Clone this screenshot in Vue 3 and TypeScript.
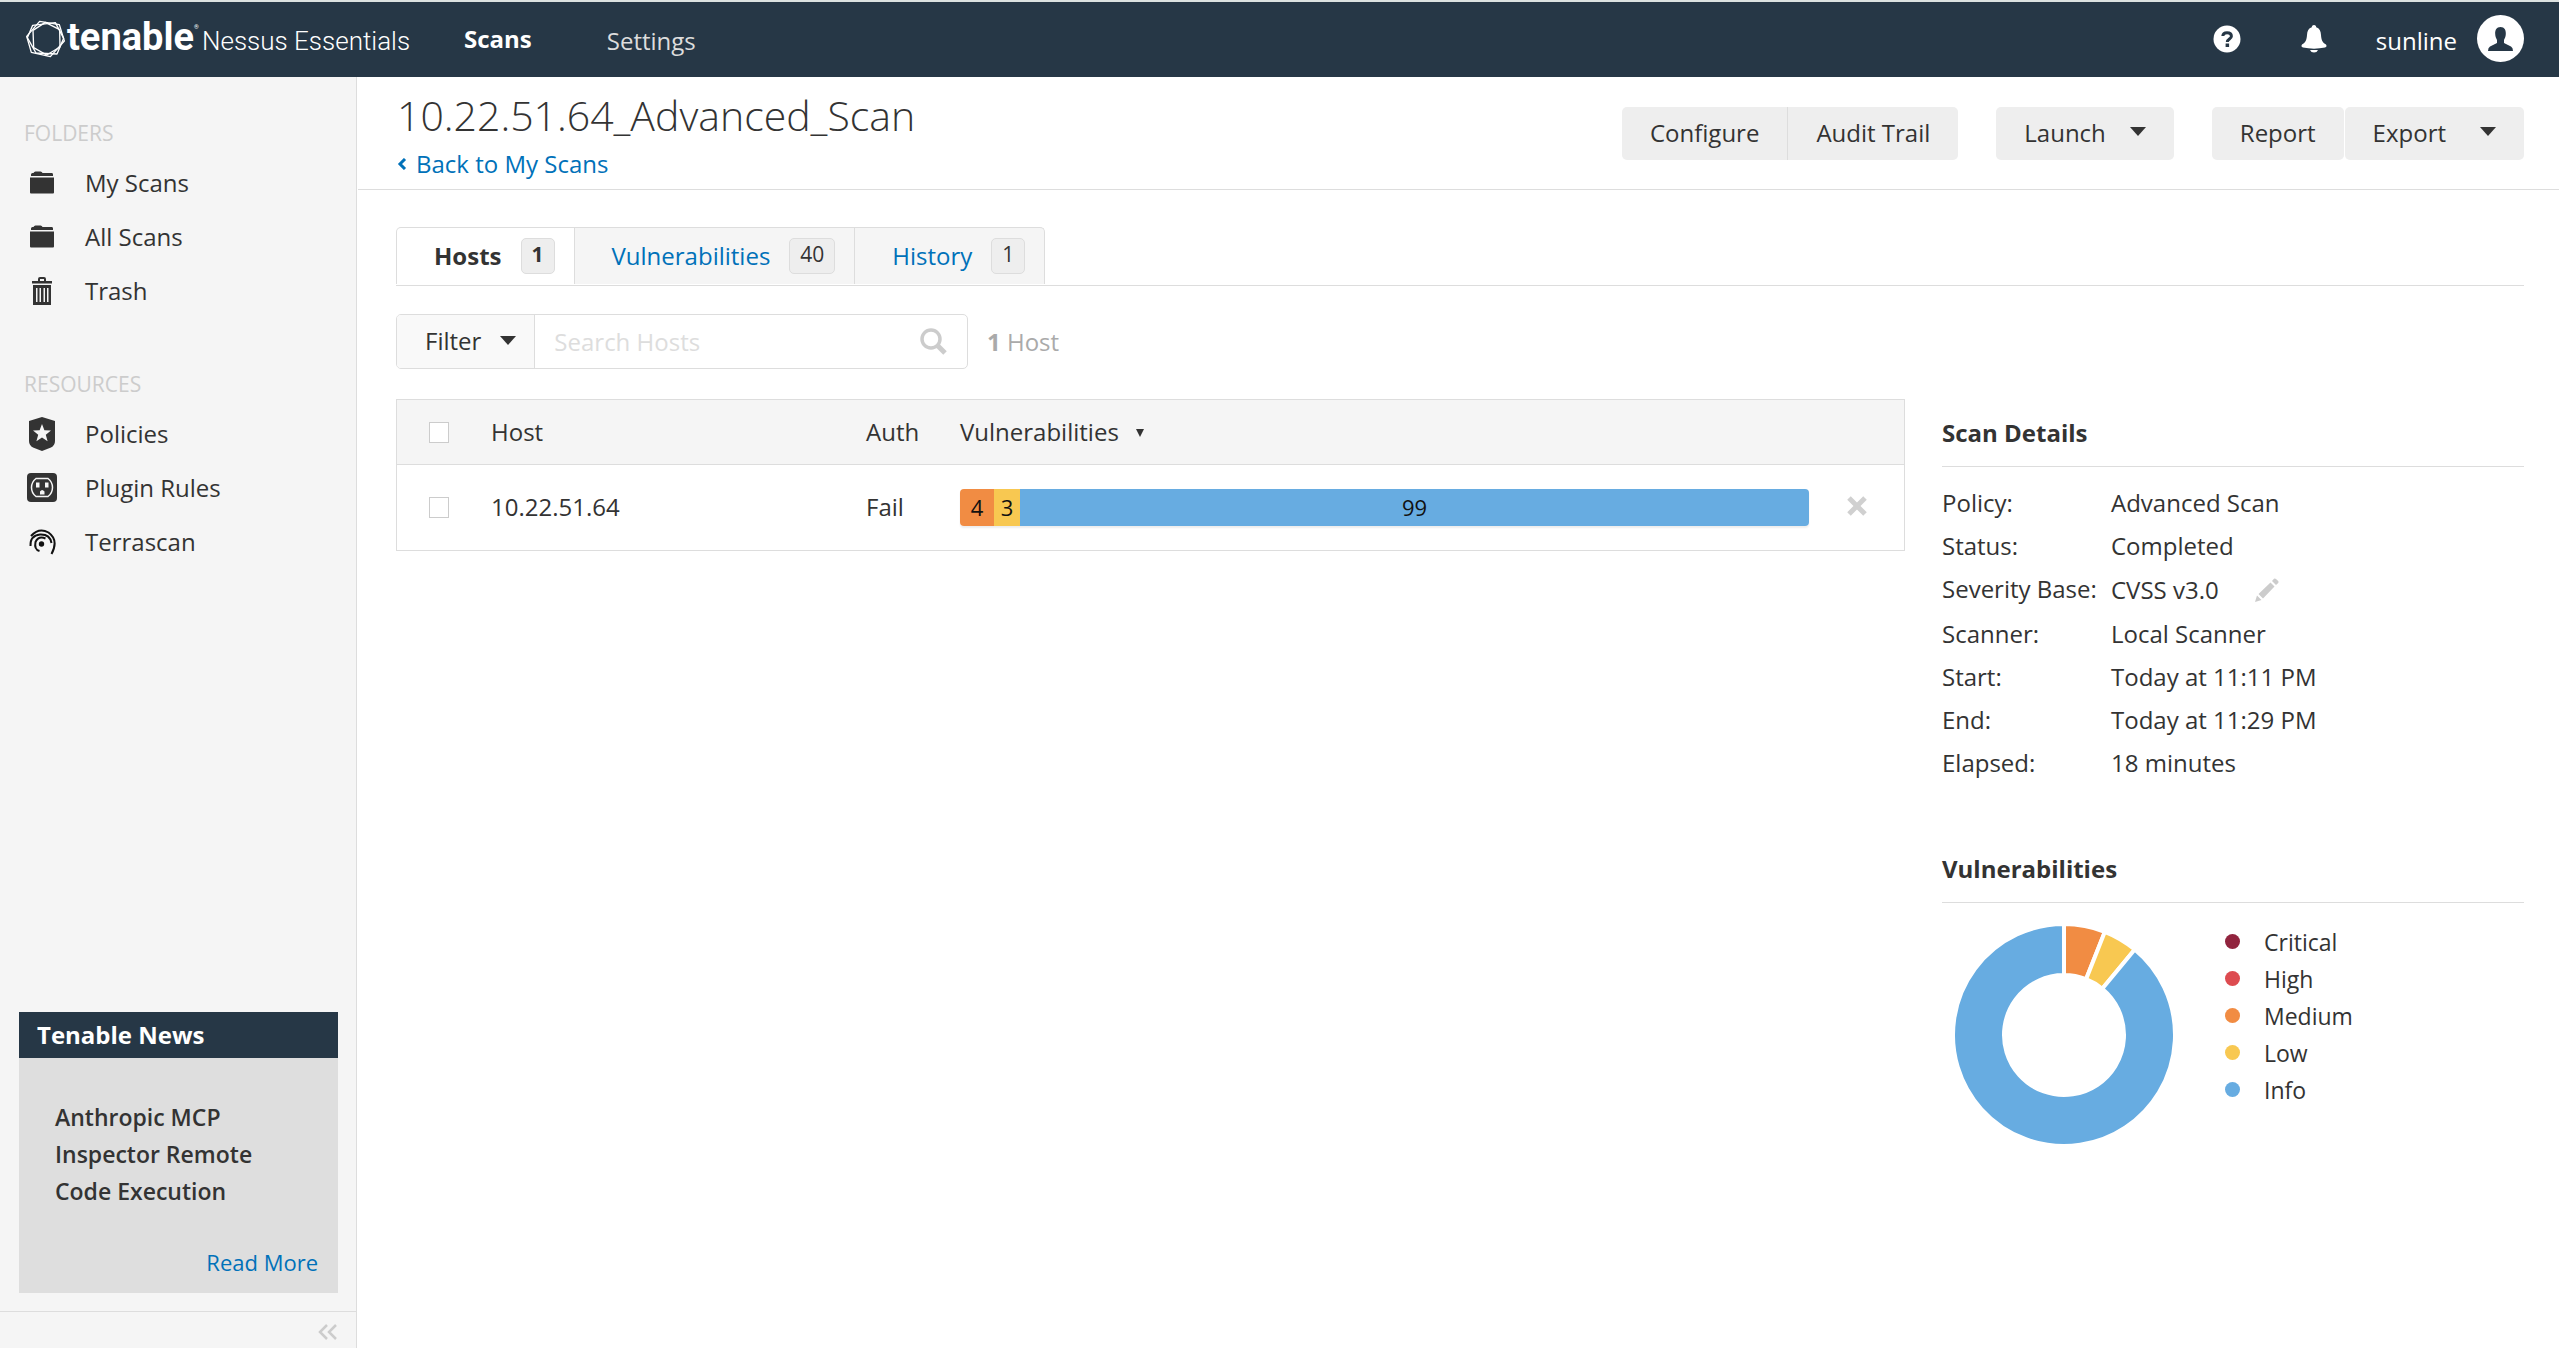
<script setup lang="ts">
import { ref } from 'vue'

interface NavItem { label: string; icon: string }
const folders: NavItem[] = [
  { label: 'My Scans', icon: 'folder' },
  { label: 'All Scans', icon: 'folder' },
  { label: 'Trash', icon: 'trash' },
]
const resources: NavItem[] = [
  { label: 'Policies', icon: 'shield' },
  { label: 'Plugin Rules', icon: 'plug' },
  { label: 'Terrascan', icon: 'terra' },
]
const groups = [
  { title: 'FOLDERS', items: folders },
  { title: 'RESOURCES', items: resources },
]
const tabs = [
  { label: 'Hosts', count: 1 },
  { label: 'Vulnerabilities', count: 40 },
  { label: 'History', count: 1 },
]
const activeTab = ref('Hosts')
const search = ref('')
const details = [
  { key: 'Policy:', value: 'Advanced Scan' },
  { key: 'Status:', value: 'Completed' },
  { key: 'Severity Base:', value: 'CVSS v3.0', editable: true },
  { key: 'Scanner:', value: 'Local Scanner' },
  { key: 'Start:', value: 'Today at 11:11 PM' },
  { key: 'End:', value: 'Today at 11:29 PM' },
  { key: 'Elapsed:', value: '18 minutes' },
]
const severities = [
  { label: 'Critical', color: '#91243e' },
  { label: 'High', color: '#dd4b50' },
  { label: 'Medium', color: '#f18c43' },
  { label: 'Low', color: '#f8c851' },
  { label: 'Info', color: '#67ace1' },
]

// Shares of the ring, clockwise from the top
const shares = [
  { color: '#f18c43', from: 0, to: 0.06 },
  { color: '#f8c851', from: 0.06, to: 0.11 },
  { color: '#67ace1', from: 0.11, to: 1 },
]
function point(r: number, t: number): string {
  const a = t * 2 * Math.PI
  return `${(110 + r * Math.sin(a)).toFixed(2)} ${(110 - r * Math.cos(a)).toFixed(2)}`
}
function slice(from: number, to: number): string {
  const big = to - from > 0.5 ? 1 : 0
  return `M${point(111, from)}A111 111 0 ${big} 1 ${point(111, to)}L${point(60, to)}A60 60 0 ${big} 0 ${point(60, from)}Z`
}
</script>

<template>
  <div class="app">
    <header class="topbar">
      <a class="brand" href="#">
        <svg class="mark" viewBox="0 0 117 112" fill="none" stroke="#fff" stroke-width="4" stroke-linejoin="round">
          <path d="M41 3 100 13 115 62 73 109 16 96 2 48Z" />
          <path d="M20 15 88 7 113 54 93 101 30 98 4 52Z" />
          <path d="M58 6 101 28 102 80 62 104 23 82 21 30Z" />
        </svg>
        <span class="wordmark">
          <span class="tenable">tenable</span><sup>®</sup>
          <span class="product">Nessus Essentials</span>
        </span>
      </a>
      <nav class="mainnav">
        <a href="#" class="current">Scans</a>
        <a href="#">Settings</a>
      </nav>
      <div class="user">
        <button type="button" class="iconbtn help" aria-label="Help">
          <svg width="28" height="28" viewBox="0 0 28 28"><circle cx="14" cy="14" r="13.5" fill="#fff" /><path d="M9.800 11C10 8 12 7.700 14 7.700S18.400 8.600 18.400 11.200C18.400 14 14.300 14 14.300 17" fill="none" stroke="#263746" stroke-width="3" /><path d="M12.600 18.500h3.500v3.500h-3.500z" fill="#263746" /></svg>
        </button>
        <button type="button" class="iconbtn bell" aria-label="Notifications">
          <svg width="26" height="28" viewBox="0 0 26 28" fill="#fff"><path d="M13 0C14.500 0 15.300 1 15.200 2.300C18.500 3.400 19.800 6 20 10C20.300 15 21.500 17.500 25 19.500C26 21 25.500 22 24 22.500C17 24 9 24 2 22.500C.5 22 0 21 1 19.500C4.500 17.500 5.700 15 6 10C6.200 6 7.500 3.400 10.800 2.300C10.700 1 11.500 0 13 0Z" /><path d="M9 25h8Q16 27.500 13 27.500T9 25Z" /></svg>
        </button>
        <span class="name">sunline</span>
        <button type="button" class="iconbtn" aria-label="Account">
          <svg width="47" height="47" viewBox="0 0 47 47"><circle cx="23.500" cy="23.500" r="23.500" fill="#fff" /><path d="M23.500 12C27.500 12 29 15 28.800 19C28.700 21.500 28 23 27 25V28L34 31.500Q36 32.500 36 36H11Q11 32.500 13 31.500L20 28V25C19 23 18.300 21.500 18.200 19C18 15 19.500 12 23.500 12Z" fill="#263746" /></svg>
        </button>
      </div>
    </header>

    <div class="body">
      <aside class="sidebar">
        <nav v-for="group in groups" :key="group.title" class="group">
          <h2>{{ group.title }}</h2>
          <a v-for="item in group.items" :key="item.label" href="#">
            <svg width="30" height="36" viewBox="0 0 30 36">
              <g v-if="item.icon === 'folder'" fill="#333"><path d="M4 11V9.500Q4 8 5.500 8H6.500Q7 6.500 8.500 6.500H13.500Q15 6.500 15.500 8H25Q26 8 26 9.500V11Z" /><path d="M3 12.500H27V27.500Q27 28.500 26 28.500H4Q3 28.500 3 27.500Z" /></g>
              <g v-else-if="item.icon === 'trash'"><path d="M5 8H11V6Q11 4 13 4H17Q19 4 19 6V8H25V10.500H5ZM13 8H17V6H13ZM6 12H24V32H6ZM9 15V29H10.500V15ZM12.500 15V29H14V15ZM16.500 15V29H18V15ZM20 15V29H21.500V15Z" fill="#333" fill-rule="evenodd" /></g>
              <g v-else-if="item.icon === 'shield'"><path d="M15 1 28 5V25Q28 29 24 31.500L15 35 6 31.500Q2 29 2 25V5Z" fill="#333" /><path d="M15 8 17.400 14.300 24 14.600 18.800 18.700 20.600 25.200 15 21.500 9.400 25.200 11.200 18.700 6 14.600 12.600 14.300Z" fill="#f5f5f5" /></g>
              <g v-else-if="item.icon === 'plug'"><rect y="3" width="30" height="29" rx="4" fill="#333" /><path d="M9 8.500H21Q25.500 12 25.500 17.500T21 26.500H9Q4.500 23 4.500 17.500T9 8.500Z" fill="none" stroke="#f5f5f5" stroke-width="1.500" /><path d="M9 12.500h3.500v5H9zM18 12.500h3.500v5H18zM13 24.500v-3q2-3 4.500 0v3z" fill="#f5f5f5" /></g>
              <g v-else fill="none" stroke="#111" stroke-width="2"><circle cx="14.500" cy="20" r="2.700" fill="#111" stroke="none" /><path d="M4 12Q12 3 21.500 8.500Q32 16 24.500 30" /><path d="M3.500 22Q3 11.500 13 10.500Q23 10 24.500 19" /><path d="M18.500 14.500Q11.500 11.500 8.500 18Q7 25.500 12.500 27" /></g>
            </svg>
            {{ item.label }}
          </a>
        </nav>
        <section class="news">
          <h3>Tenable News</h3>
          <div class="newsbody">
            <p>Anthropic MCP Inspector Remote Code Execution</p>
            <a href="#">Read More</a>
          </div>
        </section>
        <div class="collapse">
          <button type="button" aria-label="Collapse menu">
            <svg width="20" height="16" viewBox="0 0 20 16" fill="none" stroke="#ccc" stroke-width="2.500"><path d="M9 1 2 8l7 7M18 1l-7 7 7 7" /></svg>
          </button>
        </div>
      </aside>

      <main class="main">
        <div class="pagehead">
          <div>
            <h1>10.22.51.64_Advanced_Scan</h1>
            <a class="back" href="#"><svg width="10" height="12" viewBox="0 0 10 12" fill="none" stroke="#0071b9" stroke-width="3"><path d="M8 1 3 6l5 5" /></svg>Back to My Scans</a>
          </div>
          <div class="actions">
            <div class="pair"><button type="button">Configure</button><button type="button">Audit Trail</button></div>
            <button type="button" class="drop">Launch<i class="caret"></i></button>
            <div class="pair split"><button type="button">Report</button><button type="button" class="drop wide">Export<i class="caret"></i></button></div>
          </div>
        </div>

        <div class="content">
          <div class="tabs">
            <button v-for="tab in tabs" :key="tab.label" type="button" :class="{ active: tab.label === activeTab }" @click="activeTab = tab.label">
              {{ tab.label }}<span class="badge">{{ tab.count }}</span>
            </button>
          </div>

          <div class="filters">
            <div class="searchbox">
              <button type="button">Filter<i class="caret"></i></button>
              <input v-model="search" type="text" placeholder="Search Hosts" aria-label="Search Hosts" />
              <svg width="27" height="27" viewBox="0 0 27 27" fill="none" stroke="#ccc"><circle cx="11" cy="11" r="9" stroke-width="3.500" /><path d="m17.500 17.500 7.500 7.500" stroke-width="5" /></svg>
            </div>
            <span class="total"><b>1</b> Host</span>
          </div>

          <div class="columns">
            <table>
              <thead>
                <tr>
                  <th class="check"><input type="checkbox" aria-label="Select all hosts" /></th>
                  <th class="host">Host</th>
                  <th class="auth">Auth</th>
                  <th>Vulnerabilities<i class="caret small"></i></th>
                  <th class="remove"></th>
                </tr>
              </thead>
              <tbody>
                <tr>
                  <td><input type="checkbox" aria-label="Select 10.22.51.64" /></td>
                  <td>10.22.51.64</td>
                  <td>Fail</td>
                  <td><div class="bar"><span class="medium">4</span><span class="low">3</span><span class="info">99</span></div></td>
                  <td class="remove"><button type="button" aria-label="Remove host"><svg width="20" height="20" viewBox="0 0 20 20" fill="none" stroke="#d0d0d0" stroke-width="5"><path d="m2 2 16 16M18 2 2 18" /></svg></button></td>
                </tr>
              </tbody>
            </table>

            <aside class="side">
              <section>
                <h3>Scan Details</h3>
                <dl>
                  <template v-for="row in details" :key="row.key">
                    <dt>{{ row.key }}</dt>
                    <dd :class="{ editable: row.editable }">{{ row.value }}<button v-if="row.editable" type="button" aria-label="Edit severity base"><svg width="24" height="24" viewBox="0 0 24 24" fill="#ccc"><path d="M0 24 2 17.500 6.500 22ZM3.500 16 15.500 4.500 19.500 8.500 8 20.500ZM17 3 19 .8Q20 0 21 1L23.200 3Q24 4 23.200 5L21 7Z" /></svg></button></dd>
                  </template>
                </dl>
              </section>
              <section>
                <h3>Vulnerabilities</h3>
                <div class="chart">
                  <svg width="220" height="220" viewBox="0 0 220 220" role="img" aria-label="Vulnerabilities by severity">
                    <path v-for="s in shares" :key="s.color" :d="slice(s.from, s.to)" :fill="s.color" stroke="#fff" stroke-width="4" />
                  </svg>
                  <ul>
                    <li v-for="s in severities" :key="s.label"><span class="dot" :style="{ background: s.color }"></span>{{ s.label }}</li>
                  </ul>
                </div>
              </section>
            </aside>
          </div>
        </div>
      </main>
    </div>
  </div>
</template>

<style>
body { margin: 0; }
</style>

<style scoped>
* { box-sizing: border-box; }
.app { min-height: 100vh; display: flex; flex-direction: column; background: #fff; color: #333; font: 24px/36px "Open Sans", "Noto Sans", sans-serif; }
h1, h2, h3, p, ul, dl, dd { margin: 0; padding: 0; }
a { color: #0071b9; text-decoration: none; }
button { font: inherit; color: inherit; border: 0; background: none; padding: 0; cursor: pointer; }
svg { display: block; flex: none; }

.topbar { display: flex; align-items: center; height: 77px; border-top: 2px solid #dce1e0; background: #263746; color: #fff; padding: 0 35px 2px 26px; }
.brand { display: flex; align-items: center; color: #fff; width: 438px; }
.mark { width: 39px; height: 38px; margin-right: 2px; }
.wordmark { display: flex; align-items: baseline; white-space: nowrap; font-family: Roboto, sans-serif; line-height: 40px; }
.tenable { font-size: 38px; font-weight: 700; }
.wordmark sup { align-self: flex-start; font-size: 6px; line-height: 20px; width: 8px; }
.product { font-size: 26px; font-weight: 300; }
.mainnav { display: flex; gap: 75px; }
.mainnav a { color: #ddd; padding-top: 4px; }
.mainnav .current { color: #fff; font-weight: 700; padding-top: 2px; }
.user { margin-left: auto; display: flex; align-items: center; }
.help { margin-right: 60px; }
.bell { margin-right: 49px; }
.name { margin-right: 20px; padding-top: 4px; }

.body { display: flex; flex: 1; }
.sidebar { display: flex; flex-direction: column; width: 357px; flex: none; background: #f5f5f5; border-right: 1px solid #ddd; padding-top: 38px; }
.group { margin-bottom: 48px; }
.group h2 { font-size: 21px; line-height: 36px; font-weight: 400; color: #ccc; padding-left: 24px; margin-bottom: 5px; }
.group a { display: flex; align-items: center; gap: 28px; height: 54px; padding-left: 27px; color: #333; }
.news { margin: auto 18px 18px 19px; }
.news h3 { background: #263746; color: #fff; font-size: 24px; line-height: 46px; padding-left: 18px; }
.newsbody { background: #dedede; padding: 41px 20px 13px 36px; }
.newsbody p { font-size: 23px; font-weight: 600; line-height: 37px; width: 230px; }
.newsbody a { display: block; font-size: 22px; text-align: right; margin-top: 34px; }
.collapse { border-top: 1px solid #ddd; height: 37px; display: flex; justify-content: flex-end; align-items: center; padding: 3px 18px 0 0; }

.main { flex: 1; min-width: 0; }
.pagehead { display: flex; justify-content: space-between; border-bottom: 1px solid #ddd; margin-left: 1px; height: 113px; padding: 14px 35px 0 39px; }
h1 { font-size: 41px; line-height: 48px; font-weight: 300; }
.back { display: flex; align-items: center; gap: 9px; line-height: 50px; }
.actions { display: flex; gap: 38px; padding-top: 16px; }
.actions button { height: 53px; background: #eee; border-radius: 5px; padding: 0 28px 2px; }
.pair { display: flex; }
.pair:not(.split) button:first-child { border-radius: 5px 0 0 5px; border-right: 1px solid #ddd; }
.pair:not(.split) button:last-child { border-radius: 0 5px 5px 0; }
.split { gap: 1px; }
.drop { display: flex; align-items: center; gap: 24px; }
.actions .wide { gap: 34px; padding-right: 28px; }
.actions .caret { margin-bottom: 2px; }
.caret { display: inline-block; border: 8px solid transparent; border-top: 9px solid #333; border-bottom: 0; }

.content { padding: 37px 35px 0 39px; }
.tabs { display: flex; border-bottom: 1px solid #ddd; padding-bottom: 1px; }
.tabs button { display: flex; align-items: center; gap: 19px; height: 57px; background: #f5f5f5; color: #0071b9; border: 1px solid #ddd; border-width: 1px 1px 0 0; padding: 0 19px 0 37px; }
.tabs button:first-child { border-left-width: 1px; border-radius: 5px 0 0 0; }
.tabs button:last-child { border-radius: 0 5px 0 0; }
.tabs .active { background: #fff; color: #333; font-weight: 700; }
.badge { font-size: 21px; line-height: 30px; color: #333; background: #eee; border: 1px solid #ddd; border-radius: 5px; padding: 0 10px 4px; }
.filters { display: flex; align-items: center; gap: 19px; margin-top: 28px; }
.searchbox { display: flex; align-items: center; width: 572px; height: 55px; border: 1px solid #ddd; border-radius: 5px; padding-right: 20px; }
.searchbox button { display: flex; align-items: center; gap: 19px; height: 53px; padding: 0 18px 2px 28px; background: #f9f9f9; border-right: 1px solid #ddd; border-radius: 4px 0 0 4px; }
.searchbox input { flex: 1; min-width: 0; font: inherit; color: #333; border: 0; outline: 0; padding: 0 19px; background: none; }
.searchbox input::placeholder { color: #ddd; opacity: 1; }
.total { color: #aaa; }

.columns { display: flex; align-items: flex-start; gap: 37px; margin-top: 30px; }
table { flex: 1; min-width: 0; table-layout: fixed; border-collapse: separate; border-spacing: 0; border: 1px solid #ddd; }
th, td { text-align: left; font-weight: 400; padding: 0; }
th { height: 65px; background: #f5f5f5; border-bottom: 1px solid #ddd; }
td { height: 85px; padding-bottom: 1px; }
.check { width: 94px; }
.host { width: 375px; }
.auth { width: 94px; }
.remove { width: 95px; }
td.remove { padding-left: 38px; }
input[type="checkbox"] { appearance: none; display: block; width: 20px; height: 21px; border: 1px solid #ccc; background: #fff; margin: 0 0 0 32px; }
.caret.small { border-width: 8px 4px 0; margin: 0 0 4px 17px; }
.bar { display: flex; height: 37px; line-height: 36px; font-size: 22px; color: #111; text-align: center; border-radius: 4px; overflow: hidden; box-shadow: 0 2px 2px #eee; }
.medium { width: 34px; background: #f18c43; }
.low { width: 26px; background: #f8c851; }
.info { flex: 1; background: #67ace1; }

.side { width: 582px; flex: none; padding-top: 16px; }
.side h3 { font-size: 24px; line-height: 36px; font-weight: 700; padding-bottom: 15px; border-bottom: 1px solid #ddd; }
dl { display: grid; grid-template-columns: 169px 1fr; line-height: 43px; padding: 14px 0 67px; }
dt { white-space: nowrap; }
dd { display: flex; align-items: center; gap: 36px; }
.editable { height: 45px; }
.chart { display: flex; gap: 51px; padding: 22px 0 0 12px; }
ul { list-style: none; margin-top: -2px; }
li { display: flex; align-items: center; gap: 24px; height: 37px; font-size: 23px; }
.dot { width: 15px; height: 15px; border-radius: 50%; }
</style>
